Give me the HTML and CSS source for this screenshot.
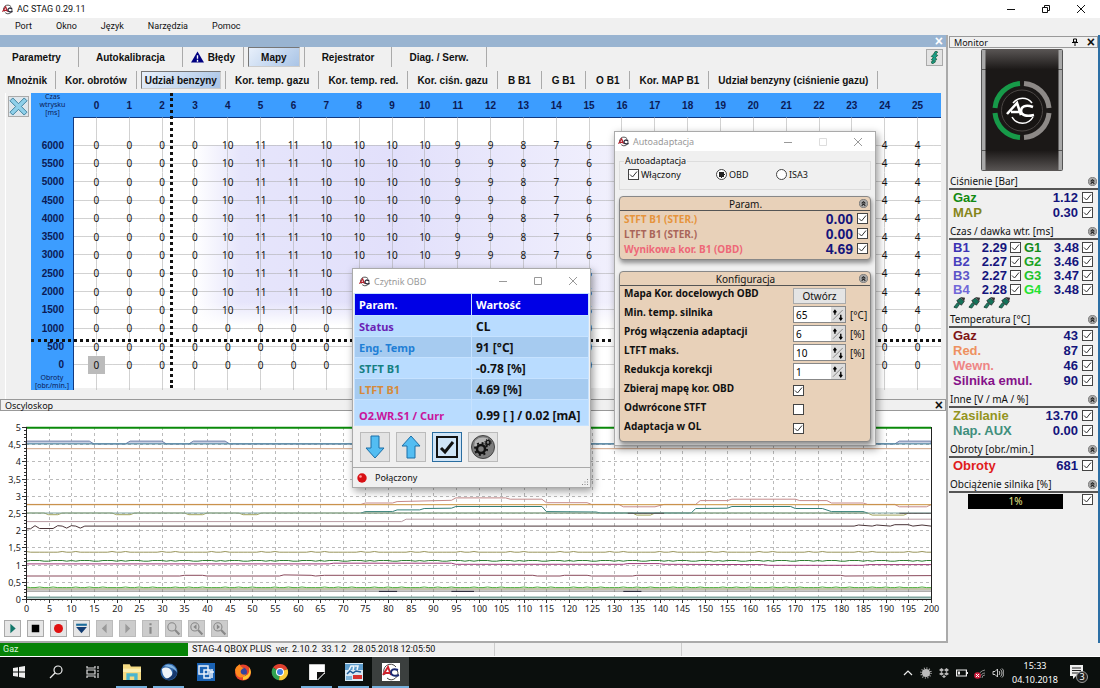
FILE: index.html
```html
<!DOCTYPE html>
<html lang="pl">
<head>
    <meta charset="UTF-8">
    <meta name="viewport" content="width=device-width, initial-scale=1.0">
    <title>AC STAG 0.29.11</title>
    <link rel="stylesheet" href="styles.css">
</head>
<body>
    <!-- Shared icons -->
    <svg class="defs" width="0" height="0">
        <symbol id="ac-logo" viewBox="0 0 24 24">
            <path d="M5 17a9.500 9.500 0 0 1 1-12 9.500 9.500 0 0 1 14 1" fill="none" stroke="#444" stroke-width="2"/>
            <path d="M21 9a9.500 9.500 0 0 1-5 12 9.500 9.500 0 0 1-9-2" fill="none" stroke="#444" stroke-width="2"/>
            <path d="M1 17L8 6l4 11M4 14h7" fill="none" stroke="#b5202c" stroke-width="2.500"/>
            <path d="M22 10c-6-3-9 0-9 3s4 6 10 3" fill="none" stroke="#223" stroke-width="2.800"/>
        </symbol>
        <symbol id="fold" viewBox="0 0 10 10">
            <circle cx="5" cy="5" r="4.500" fill="#aaa" stroke="#777"/>
            <path d="M3 5l2-2 2 2M3 7.500l2-2 2 2" fill="none" stroke="#222" stroke-width="1.200"/>
        </symbol>
        <symbol id="injector" viewBox="0 0 14 14">
            <path d="M1 12l4-5 2 2-3 4z" fill="#1c7a63" stroke="#1c4a3c"/>
            <path d="M4 5l4-3 4 4-3 4z" fill="#14735a" stroke="#222" stroke-width=".8"/>
            <path d="M8 1l5 1-1 4z" fill="#333"/>
        </symbol>
        <symbol id="cross" viewBox="0 0 10 10">
            <path d="M1 1l8 8M9 1l-8 8" fill="none" stroke="currentColor"/>
        </symbol>
        <symbol id="square" viewBox="0 0 10 10">
            <path d="M1.500 1.500h7v7h-7z" fill="none" stroke="currentColor"/>
        </symbol>
        <symbol id="dash" viewBox="0 0 10 10">
            <path d="M1 5.500h8" fill="none" stroke="currentColor"/>
        </symbol>
        <symbol id="lens" viewBox="0 0 14 14">
            <circle cx="5.500" cy="5.500" r="3.800" fill="none" stroke="#888"/>
            <path d="M8.500 8.500l4 4" stroke="#888" stroke-width="2"/>
        </symbol>
    </svg>

    <header class="titlebar">
        <svg class="app-icon"><use href="#ac-logo"/></svg>
        <span>AC STAG 0.29.11</span>
        <div class="window-buttons">
            <button aria-label="Minimalizuj"><svg><use href="#dash"/></svg></button>
            <button aria-label="Przywróć"><svg viewBox="0 0 10 10"><path d="M1.500 3.500h5v5h-5zM3.500 3V1.500h5v5H7" fill="none" stroke="#111"/></svg></button>
            <button aria-label="Zamknij"><svg><use href="#cross"/></svg></button>
        </div>
    </header>

    <nav class="menubar">
        <button>Port</button>
        <button>Okno</button>
        <button>Język</button>
        <button>Narzędzia</button>
        <button>Pomoc</button>
    </nav>

    <div class="workspace">
        <main class="left">
            <div class="strip"><button class="x-button light" aria-label="Zamknij">×</button></div>

            <div class="tabs main-tabs">
                <button class="tab">Parametry</button>
                <button class="tab">Autokalibracja</button>
                <button class="tab warn">
                    <svg viewBox="0 0 14 12"><path d="M7 0l7 12H0z" fill="#000080"/><path d="M7 4v4M7 9v2" stroke="#fff" stroke-width="1.500"/></svg>
                    Błędy
                </button>
                <button class="tab selected">Mapy</button>
                <button class="tab">Rejestrator</button>
                <button class="tab">Diag. / Serw.</button>
                <button class="wake" aria-label="Wtryskiwacze">
                    <svg viewBox="0 0 12 12"><path d="M7 0l2 1-2 2 2 1-2 2 1 2-2 1 1 1-3 2-1-2 2-1-2-1 2-2-2-1 2-2z" fill="#19a08a" stroke="#153" stroke-width=".7"/></svg>
                </button>
            </div>

            <div class="tabs map-tabs">
                <button class="tab">Mnożnik</button>
                <button class="tab">Kor. obrotów</button>
                <button class="tab selected">Udział benzyny</button>
                <button class="tab">Kor. temp. gazu</button>
                <button class="tab">Kor. temp. red.</button>
                <button class="tab">Kor. ciśn. gazu</button>
                <button class="tab bank">B B1</button>
                <button class="tab bank">G B1</button>
                <button class="tab bank">O B1</button>
                <button class="tab">Kor. MAP B1</button>
                <button class="tab">Udział benzyny (ciśnienie gazu)</button>
            </div>

            <section class="map-panel">
                <div class="map-tools">
                    <button aria-label="Wyczyść">
                        <svg viewBox="0 0 20 20"><path d="M4 1l6 6 6-6 3 3-6 6 6 6-3 3-6-6-6 6-3-3 6-6-6-6z" fill="#8fd0ea" stroke="#3c7f9c"/></svg>
                    </button>
                </div>
                <div class="map">
                    <table>
                        <tbody id="map-body"></tbody>
                    </table>
                    <div class="cursor-x"></div>
                    <div class="cursor-y"></div>
                </div>
            </section>

            <section class="scope">
                <div class="scope-title">
                    <span>Oscyloskop</span>
                    <button class="x-button" aria-label="Zamknij">×</button>
                </div>
                <svg id="scope-chart"></svg>
                <div class="scope-tools">
                    <button aria-label="Start"><svg viewBox="0 0 14 14"><path d="M5 2.500l5 4.500-5 4.500z" fill="#13776a"/></svg></button>
                    <button aria-label="Stop"><svg viewBox="0 0 14 14"><path d="M3.500 3.500h7v7h-7z"/></svg></button>
                    <button aria-label="Nagrywaj"><svg viewBox="0 0 14 14"><circle cx="7" cy="7" r="4.200" fill="#e01010"/></svg></button>
                    <button aria-label="Zapisz"><svg viewBox="0 0 14 14"><path d="M2 2.500h10v2H2z" fill="#1c6c9c"/><path d="M2 5.500h10l-5 6z" fill="#123c72"/></svg></button>
                    <button disabled aria-label="Wstecz"><svg viewBox="0 0 14 14"><path d="M9 2.500L4.500 7 9 11.500z" fill="#999"/></svg></button>
                    <button disabled aria-label="Dalej"><svg viewBox="0 0 14 14"><path d="M5 2.500L9.500 7 5 11.500z" fill="#999"/></svg></button>
                    <button disabled aria-label="Informacja"><svg viewBox="0 0 14 14"><path d="M7 2v2M7 5.500V12" stroke="#888" stroke-width="2"/></svg></button>
                    <button disabled aria-label="Lupa"><svg viewBox="0 0 14 14"><use href="#lens"/></svg></button>
                    <button disabled aria-label="Lupa w lewo"><svg viewBox="0 0 14 14"><use href="#lens"/><path d="M7 3L4 5.500 7 8z" fill="#888"/></svg></button>
                    <button disabled aria-label="Lupa w prawo"><svg viewBox="0 0 14 14"><use href="#lens"/><path d="M4.500 3l3 2.500-3 2.500z" fill="#888"/></svg></button>
                </div>
            </section>
        </main>

        <aside class="monitor">
            <div class="monitor-title">
                <span>Monitor</span>
                <button aria-label="Przypnij"><svg viewBox="0 0 8 8"><path d="M2.500 1h3v3h-3zM1 4.500h6M4 5v3" fill="none" stroke="#000"/></svg></button>
                <button class="x-button" aria-label="Zamknij">×</button>
            </div>

            <svg class="device" viewBox="0 0 82 122">
                <defs>
                    <linearGradient id="body" x1="0" y1="0" x2="0" y2="1">
                        <stop offset="0" stop-color="#5a5655"/>
                        <stop offset=".17" stop-color="#1b1817"/>
                        <stop offset=".83" stop-color="#1b1817"/>
                        <stop offset="1" stop-color="#5a5655"/>
                    </linearGradient>
                </defs>
                <rect x=".5" y=".5" width="81" height="121" rx="1" fill="#a9a9a9" stroke="#555"/>
                <path d="M0 20.500h82M0 101.500h82" stroke="#555"/>
                <path d="M4.500 0h73v122h-73z" fill="url(#body)"/>
                <g fill="none" stroke-width="5">
                    <path d="M39 34.500A27 27 0 0 0 14 59" stroke="#179a49"/>
                    <path d="M14 64A27 27 0 0 0 39 88.500" stroke="#179a49"/>
                    <path d="M43 34.500A27 27 0 0 1 68 59" stroke="#8d8987"/>
                    <path d="M68 64A27 27 0 0 1 43 88.500" stroke="#8d8987"/>
                </g>
                <circle cx="41" cy="61.500" r="20.500" fill="#171413" stroke="#4c4745"/>
                <g fill="none" stroke="#fff">
                    <path d="M32 54A12 12 0 0 1 51 54M52 68A12 12 0 0 1 31 68" stroke-width="1.500"/>
                    <path d="M26 65L36 54l4 12M30 63h9" stroke-width="2.600"/>
                    <path d="M52 58c-8-3-12 0-12 4s5 6 13 4" stroke-width="2.600"/>
                </g>
            </svg>

            <section>
                <h2>Ciśnienie [Bar]<svg><use href="#fold"/></svg></h2>
                <label class="reading gas"><span>Gaz</span><output>1.12</output><input type="checkbox" checked></label>
                <label class="reading map-sensor"><span>MAP</span><output>0.30</output><input type="checkbox" checked></label>
            </section>
            <section>
                <h2>Czas / dawka wtr. [ms]<svg><use href="#fold"/></svg></h2>
                <div class="cylinders">
                    <label class="reading b1"><span>B1</span><output>2.29</output><input type="checkbox" checked></label>
                    <label class="reading g1"><span>G1</span><output>3.48</output><input type="checkbox" checked></label>
                    <label class="reading b2"><span>B2</span><output>2.27</output><input type="checkbox" checked></label>
                    <label class="reading g2"><span>G2</span><output>3.46</output><input type="checkbox" checked></label>
                    <label class="reading b3"><span>B3</span><output>2.27</output><input type="checkbox" checked></label>
                    <label class="reading g3"><span>G3</span><output>3.47</output><input type="checkbox" checked></label>
                    <label class="reading b4"><span>B4</span><output>2.28</output><input type="checkbox" checked></label>
                    <label class="reading g4"><span>G4</span><output>3.48</output><input type="checkbox" checked></label>
                </div>
                <div class="injectors">
                    <svg><use href="#injector"/></svg>
                    <svg><use href="#injector"/></svg>
                    <svg><use href="#injector"/></svg>
                    <svg><use href="#injector"/></svg>
                </div>
            </section>
            <section>
                <h2>Temperatura [°C]<svg><use href="#fold"/></svg></h2>
                <label class="reading gas-temp"><span>Gaz</span><output>43</output><input type="checkbox" checked></label>
                <label class="reading red-temp"><span>Red.</span><output>87</output><input type="checkbox" checked></label>
                <label class="reading inner-temp"><span>Wewn.</span><output>46</output><input type="checkbox" checked></label>
                <label class="reading engine-temp"><span>Silnika emul.</span><output>90</output><input type="checkbox" checked></label>
            </section>
            <section>
                <h2>Inne [V / mA / %]<svg><use href="#fold"/></svg></h2>
                <label class="reading supply"><span>Zasilanie</span><output>13.70</output><input type="checkbox" checked></label>
                <label class="reading aux"><span>Nap. AUX</span><output>0.00</output><input type="checkbox" checked></label>
            </section>
            <section>
                <h2>Obroty [obr./min.]<svg><use href="#fold"/></svg></h2>
                <label class="reading rpm"><span>Obroty</span><output>681</output><input type="checkbox" checked></label>
            </section>
            <section>
                <h2>Obciążenie silnika [%]<svg><use href="#fold"/></svg></h2>
                <label class="load"><span>1%</span><input type="checkbox" checked></label>
            </section>
        </aside>
    </div>

    <footer class="statusbar">
        <span class="fuel">Gaz</span>
        <span class="version">STAG-4 QBOX PLUS&nbsp; ver. 2.10.2&nbsp; 33.1.2&nbsp;&nbsp; 28.05.2018 12:05:50</span>
        <span class="cell"></span>
    </footer>

    <nav class="taskbar">
        <button aria-label="Start"><svg viewBox="0 0 16 16"><path d="M2 4l5-.8V7.600H2zM8 3l6-1v5.600H8zM2 8.400h5v4.400L2 12zM8 8.400h6V14l-6-1z" fill="#eee"/></svg></button>
        <button aria-label="Szukaj"><svg viewBox="0 0 16 16"><circle cx="10" cy="6" r="4" fill="none" stroke="#eee" stroke-width="1.200"/><path d="M7 9l-5 5" stroke="#eee" stroke-width="1.300"/></svg></button>
        <button aria-label="Widok zadań"><svg viewBox="0 0 16 16"><path d="M2 2v2h8V2M2 14v-2h8v2M2 6h8v4H2zM13 2v3M13 9v5M12 7h2" fill="none" stroke="#ddd" stroke-width="1.200"/></svg></button>
        <button class="open pinned" aria-label="Eksplorator"><svg viewBox="0 0 16 16"><path d="M0 1h6l1 2h9v12H0z" fill="#f4da82"/><path d="M0 5h16v3H0z" fill="#fbeeb0"/><path d="M3 9h10v6h-3v-3H6v3H3z" fill="#49b5cf"/></svg></button>
        <button class="open" aria-label="Thunderbird"><svg viewBox="0 0 18 18"><circle cx="9" cy="9" r="8.500" fill="#2d62a3"/><path d="M2 6c4-3 9-1 10 3 1 3-1 6-4 7-4-1-6-5-6-10z" fill="#eef3f8"/><path d="M4 3c5-4 12 0 13 6-3-4-8-5-13-6z" fill="#7fb2df"/><path d="M5 16c4 2 9 1 12-5 0-2-2-4-4-4 1 5-3 8-8 9z" fill="#17386c"/></svg></button>
        <button aria-label="Pulpit zdalny"><svg viewBox="0 0 18 18"><path d="M0 0h18v18H0z" fill="#1a62b4"/><path d="M2 3h9v8H2zM7 7h6v8H7zM13 9h4M15 6v9" fill="none" stroke="#eaf2fb" stroke-width="1.500"/></svg></button>
        <button aria-label="Firefox"><svg viewBox="0 0 18 18"><circle cx="9" cy="9.500" r="8" fill="#e8432c"/><path d="M9 17A8 8 0 0 0 15 4c1 6-1 9-6 9z" fill="#ffc52e"/><circle cx="8.500" cy="9" r="4.500" fill="#35449c"/><path d="M1 7C2 3 5 2 6 1c0 3 2 3 4 4-3 1-4 3-3 5s4 2 5 1c-1 4-8 5-10 0z" fill="#ff8a1e"/></svg></button>
        <button aria-label="Chrome"><svg viewBox="0 0 18 18"><path d="M9 9L2 4.500A8.300 8.300 0 0 1 16.500 6z" fill="#e0402f"/><path d="M9 9L2 4.500A8.300 8.300 0 0 0 8 17.300z" fill="#31a350"/><path d="M9 9l7.500-3A8.300 8.300 0 0 1 8 17.300z" fill="#f9ca3a"/><circle cx="9" cy="9" r="4" fill="#fff"/><circle cx="9" cy="9" r="3" fill="#3e7de0"/></svg></button>
        <button class="open" aria-label="Notatki"><svg viewBox="0 0 16 16"><path d="M1 1h14v8l-6 6H1z" fill="#fff"/><path d="M8 8h7l-7 7z" fill="#111"/></svg></button>
        <button class="open" aria-label="Edytor map"><svg viewBox="0 0 18 18"><path d="M0 0h18v18H0z" fill="#d8e9f5"/><path d="M0 1h18v6H0z" fill="#5d9ccb"/><path d="M4 7l2-4h3L8 7M10 3h3l-1 4" fill="none" stroke="#eef5fb" stroke-width="1.500"/><path d="M2 11l3-3 3 2 3-2 5 1" fill="none" stroke="#1d5c97" stroke-width="1.500"/><path d="M8 12h9v4H8z" fill="#d5322e"/><path d="M1 13h6v4H1z" fill="#7db4da"/></svg></button>
        <button class="open active" aria-label="AC STAG"><svg viewBox="0 0 18 18"><path d="M0 0h18v18H0z" fill="#fff"/><path d="M3 12a6.500 6.500 0 0 1 11-8M15 7a6.500 6.500 0 0 1-10 8" fill="none" stroke="#444"/><path d="M1 12l5-8 3 8M3 10h5" fill="none" stroke="#d0222c" stroke-width="1.900"/><path d="M16 7c-5-2-7 0-7 2.500S12 14 17 12" fill="none" stroke="#1b2a72" stroke-width="2"/></svg></button>

        <div class="tray">
            <svg viewBox="0 0 12 12"><path d="M2 8l4-4 4 4" fill="none" stroke="#eee" stroke-width="1.200"/></svg>
            <svg viewBox="0 0 12 12"><circle cx="6" cy="6" r="4" fill="#bbb"/><circle cx="6" cy="6" r="5" fill="none" stroke="#aaa" stroke-width="1.500" stroke-dasharray="1 1.600"/></svg>
            <svg viewBox="0 0 12 12"><path d="M3.500 1L6 3 3.500 5 1 3zM8.500 1L11 3 8.500 5 6 3zM3.500 5L6 7 3.500 8.500 1 7zM8.500 5L11 7 8.500 8.500 6 7zM6 8l2 1.500L6 11 4 9.500z" fill="#bbb"/></svg>
            <svg viewBox="0 0 12 12"><path d="M.6 3h9.800v6H.6zM11.500 5v2" fill="none" stroke="#eee" stroke-width="1.200"/><path d="M2 4.500h2v3H2z" fill="#eee"/></svg>
            <svg viewBox="0 0 12 12"><path d="M4 11A8 8 0 0 1 11 3M6 11a5 5 0 0 1 5-5M8 11a3 3 0 0 1 3-3" fill="none" stroke="#888"/><circle cx="3.500" cy="8.500" r="3.300" fill="#d02040"/><path d="M2 7l3 3M5 7l-3 3" stroke="#fff"/></svg>
            <svg viewBox="0 0 12 12"><path d="M1 4.500h2L5.500 2v8L3 7.500H1zM7 4c1 1 1 3 0 4M8.500 2.500c2 2 2 5 0 7M10 1.500c2.500 2.500 2.500 6.500 0 9" fill="none" stroke="#ddd" stroke-width=".9"/></svg>
            <time>15:33<br>04.10.2018</time>
            <svg class="notices" viewBox="0 0 20 20"><path d="M2 2h13v11h-7l-3 3v-3H2z" fill="#eee"/><path d="M4 5h9M4 7.500h9M4 10h6" stroke="#222"/><circle cx="14" cy="14" r="5.500" fill="#222" stroke="#999"/><text x="14" y="17" text-anchor="middle">3</text></svg>
        </div>
    </nav>

    <!-- OBD reader window -->
    <section class="window obd">
        <header class="window-title">
            <svg class="app-icon"><use href="#ac-logo"/></svg>
            <span>Czytnik OBD</span>
            <div class="window-buttons">
                <button aria-label="Minimalizuj"><svg><use href="#dash"/></svg></button>
                <button aria-label="Maksymalizuj"><svg><use href="#square"/></svg></button>
                <button aria-label="Zamknij"><svg><use href="#cross"/></svg></button>
            </div>
        </header>
        <table>
            <tr><th>Param.</th><th>Wartość</th></tr>
            <tr><td class="status">Status</td><td class="value">CL</td></tr>
            <tr><td class="eng">Eng. Temp</td><td class="value">91 [°C]</td></tr>
            <tr><td class="stft">STFT B1</td><td class="value">-0.78 [%]</td></tr>
            <tr><td class="ltft">LTFT B1</td><td class="value">4.69 [%]</td></tr>
            <tr><td class="o2">O2.WR.S1 / Curr</td><td class="value">0.99 [ ] / 0.02 [mA]</td></tr>
        </table>
        <div class="obd-tools">
            <button aria-label="W dół"><svg viewBox="0 0 24 24"><path d="M8 1h8v12h5l-9 10-9-10h5z" fill="#53bdf2" stroke="#1b6fa8"/></svg></button>
            <button aria-label="W górę"><svg viewBox="0 0 24 24"><path d="M8 23h8V11h5L12 1 3 11h5z" fill="#53bdf2" stroke="#1b6fa8"/></svg></button>
            <button class="pressed" aria-label="Wybierz"><svg viewBox="0 0 24 24"><path d="M2 2h20v20H2z" fill="none" stroke="#111" stroke-width="2"/><path d="M6 13l4 4 8-10" fill="none" stroke="#111" stroke-width="3"/></svg></button>
            <button aria-label="Ustawienia"><svg viewBox="0 0 24 24"><circle cx="12" cy="12" r="11.500" fill="#7d7d7d" stroke="#444"/><path d="M4 6a11 11 0 0 1 16 0c-5 2-11 3-17 6z" fill="#b5b5b5"/><circle cx="10" cy="14" r="4" fill="none" stroke="#111" stroke-width="2.500"/><circle cx="10" cy="14" r="6" fill="none" stroke="#111" stroke-width="2" stroke-dasharray="2 2.700"/><circle cx="17" cy="7.500" r="2" fill="none" stroke="#111" stroke-width="1.500"/><circle cx="17" cy="7.500" r="3.200" fill="none" stroke="#111" stroke-dasharray="1.200 1.300"/></svg></button>
        </div>
        <footer class="obd-status">
            <svg viewBox="0 0 10 10"><circle cx="5" cy="5" r="4.700" fill="#d80f14"/><circle cx="3.500" cy="3.500" r="1.300" fill="#ff9d9d"/></svg>
            <span>Połączony</span>
            <svg class="grip" viewBox="0 0 8 8"><path d="M6 1h1v1H6zM6 3.500h1v1H6zM3.500 3.500h1v1h-1zM6 6h1v1H6zM3.500 6h1v1h-1zM1 6h1v1H1z" fill="#888"/></svg>
        </footer>
    </section>

    <!-- Autoadaptation window -->
    <section class="window adapt">
        <header class="window-title">
            <svg class="app-icon"><use href="#ac-logo"/></svg>
            <span>Autoadaptacja</span>
            <div class="window-buttons">
                <button aria-label="Minimalizuj"><svg><use href="#dash"/></svg></button>
                <button disabled aria-label="Maksymalizuj"><svg><use href="#square"/></svg></button>
                <button aria-label="Zamknij"><svg><use href="#cross"/></svg></button>
            </div>
        </header>
        <fieldset>
            <legend>Autoadaptacja</legend>
            <label><input type="checkbox" checked>Włączony</label>
            <label><input type="radio" name="mode" checked>OBD</label>
            <label><input type="radio" name="mode">ISA3</label>
        </fieldset>
        <div class="card">
            <h2>Param.<svg><use href="#fold"/></svg></h2>
            <label class="result ster"><span>STFT B1 (STER.)</span><output>0.00</output><input type="checkbox" checked></label>
            <label class="result lster"><span>LTFT B1 (STER.)</span><output>0.00</output><input type="checkbox" checked></label>
            <label class="result wyn"><span>Wynikowa kor. B1 (OBD)</span><output>4.69</output><input type="checkbox" checked></label>
        </div>
        <div class="card config">
            <h2>Konfiguracja<svg><use href="#fold"/></svg></h2>
            <div class="option"><span class="name">Mapa Kor. docelowych OBD</span><button class="open-map">Otwórz</button></div>
            <div class="option">
                <label class="name" for="min-temp">Min. temp. silnika</label>
                <div class="spin"><input id="min-temp" type="text" value="65"><button aria-label="Zmień"><svg viewBox="0 0 14 14"><path d="M2 12L12 2" stroke="#888"/><path d="M4 7V3M2.500 4.500L4 2.500l1.500 2M10 7v5M8.500 10l1.500 2 1.500-2" fill="none" stroke="#000" stroke-width="1.400"/></svg></button></div>
                <span class="unit">[°C]</span>
            </div>
            <div class="option">
                <label class="name" for="threshold">Próg włączenia adaptacji</label>
                <div class="spin"><input id="threshold" type="text" value="6"><button aria-label="Zmień"><svg viewBox="0 0 14 14"><path d="M2 12L12 2" stroke="#888"/><path d="M4 7V3M2.500 4.500L4 2.500l1.500 2M10 7v5M8.500 10l1.500 2 1.500-2" fill="none" stroke="#000" stroke-width="1.400"/></svg></button></div>
                <span class="unit">[%]</span>
            </div>
            <div class="option">
                <label class="name" for="ltft-max">LTFT maks.</label>
                <div class="spin"><input id="ltft-max" type="text" value="10"><button aria-label="Zmień"><svg viewBox="0 0 14 14"><path d="M2 12L12 2" stroke="#888"/><path d="M4 7V3M2.500 4.500L4 2.500l1.500 2M10 7v5M8.500 10l1.500 2 1.500-2" fill="none" stroke="#000" stroke-width="1.400"/></svg></button></div>
                <span class="unit">[%]</span>
            </div>
            <div class="option">
                <label class="name" for="reduction">Redukcja korekcji</label>
                <div class="spin"><input id="reduction" type="text" value="1"><button aria-label="Zmień"><svg viewBox="0 0 14 14"><path d="M2 12L12 2" stroke="#888"/><path d="M4 7V3M2.500 4.500L4 2.500l1.500 2M10 7v5M8.500 10l1.500 2 1.500-2" fill="none" stroke="#000" stroke-width="1.400"/></svg></button></div>
            </div>
            <div class="option"><label class="name" for="collect">Zbieraj mapę kor. OBD</label><input id="collect" type="checkbox" checked></div>
            <div class="option"><label class="name" for="inverted">Odwrócone STFT</label><input id="inverted" type="checkbox"></div>
            <div class="option"><label class="name" for="open-loop">Adaptacja w OL</label><input id="open-loop" type="checkbox" checked></div>
        </div>
    </section>

    <script src="script.js"></script>
</body>
</html>
```
FILE: styles.css
```css
* {
    box-sizing: border-box;
}

body {
    margin: 0;
    height: 100vh;
    display: flex;
    flex-direction: column;
    overflow: hidden;
    background: #f0f0f0;
    color: #111;
    font-family: "Noto Sans", "Open Sans", sans-serif;
    font-size: 9px;
}

button {
    padding: 0;
    border: none;
    background: none;
    color: inherit;
    font: inherit;
}

button svg {
    display: block;
}

h2 {
    margin: 0;
    font-weight: 400;
}

.defs {
    position: absolute;
}

/* Check boxes and radio buttons */
input[type="checkbox"],
input[type="radio"] {
    appearance: none;
    flex: none;
    width: 11px;
    height: 11px;
    margin: 0;
    border: 1px solid #444;
    background: #fff center / 9px 9px no-repeat;
}

input[type="checkbox"]:checked {
    background-image: url("data:image/svg+xml,%3Csvg xmlns='http://www.w3.org/2000/svg' viewBox='0 0 9 9'%3E%3Cpath d='M1 4.500l2.500 2.500L8 1.500' fill='none' stroke='%23333'/%3E%3C/svg%3E");
}

input[type="radio"] {
    border-radius: 50%;
}

input[type="radio"]:checked {
    background: radial-gradient(circle, #222 0 3px, #fff 3px);
}

/* Title bar and menu */
.titlebar,
.menubar,
.statusbar {
    font-family: Roboto, "Noto Sans", sans-serif;
}

.titlebar {
    display: flex;
    align-items: center;
    height: 18px;
    padding: 0 2px;
    gap: 4px;
    background: #fff;
}

.app-icon {
    width: 11px;
    height: 11px;
}

.window-buttons {
    display: flex;
    margin-left: auto;
}

.window-buttons button {
    width: 35px;
    display: flex;
    justify-content: center;
}

.window-buttons svg {
    width: 10px;
    height: 10px;
}

.menubar {
    display: flex;
    align-items: center;
    height: 17px;
    padding-left: 3px;
}

.menubar button {
    padding: 0 12px 1px;
}

/* Work area */
.workspace {
    flex: 1;
    min-height: 0;
    display: flex;
    border-right: 2px solid #2c6fa5;
}

.left {
    flex: 1;
    min-width: 0;
    display: flex;
    flex-direction: column;
    border-right: 2px solid #aaa;
}

.strip {
    display: flex;
    justify-content: flex-end;
    height: 12px;
    padding-right: 3px;
    background: #99b4d1;
}

.x-button {
    font: bold 14px/12px "Liberation Sans", sans-serif;
}

.x-button.light {
    color: #fff;
}

.tabs {
    display: flex;
    height: 20px;
    font: bold 10px "Liberation Sans", Arial, sans-serif;
    white-space: nowrap;
}

.map-tabs {
    height: 18px;
    margin: 4px 0;
}

.tab {
    padding: 0 17px;
    border-right: 1px solid #aaa;
}

.main-tabs .tab:first-child {
    padding-left: 12px;
}

.main-tabs .warn {
    display: flex;
    align-items: center;
    gap: 4px;
    padding: 0 8px;
}

.warn svg {
    width: 13px;
    height: 12px;
}

.map-tabs .tab {
    padding: 0 9px;
}

.map-tabs .tab:first-child {
    padding: 0 8px 0 7px;
}

.map-tabs .bank {
    padding: 0 10px;
}

.main-tabs .selected,
.map-tabs .selected {
    margin: 0 4px;
    border: 1px solid #777;
    border-right-color: #ccc;
    border-bottom-color: #ccc;
    background: linear-gradient(135deg, #e8f0fb, #a9c4e6);
}

.main-tabs .selected {
    padding: 0 12px;
}

.map-tabs .selected {
    padding: 0 3px;
}

.selected + .tab {
    border-left: 1px solid #aaa;
}

.wake {
    width: 17px;
    height: 17px;
    margin: 2px 3px 0 auto;
    border: 1px solid #aaa;
    background: #e3e3e3;
}

.wake svg {
    height: 13px;
    margin: auto;
}

/* Fuel share map */
.map-panel {
    flex: 295;
    min-height: 0;
    display: flex;
    margin-left: 5px;
    padding: 0 5px 11px 0;
    border-left: 1px solid #fff;
}

.map-tools {
    width: 25px;
    padding: 3px 2px;
}

.map-tools button {
    width: 21px;
    height: 21px;
    border: 1px solid #aaa;
    background: #dde6ec;
}

.map {
    flex: 1;
    position: relative;
    background: #fff;
}

.map table {
    display: block;
    height: 100%;
}

.map tbody {
    display: grid;
    height: 100%;
    grid-template-rows: 24px 19px repeat(13, 1fr) 14px;
    background:
        linear-gradient(#fff0, #fff) 0 77% / 100% 8% no-repeat,
        linear-gradient(90deg, #fff0 18%, #e6e5fb 23%, #e2e0fb 40%, #f2f1fd 66%, #fff0 90%) 0 37% / 100% 60% no-repeat,
        #fff;
    background:
        linear-gradient(#fff0, #fff) 0 77% / 100% 8% no-repeat,
        linear-gradient(90deg, #fff0 18%, #e6e5fb 23%, #e2e0fb 40%, #f2f1fd 66%, #fff0 90%) 0 45% / 100% 61% no-repeat;
}

.map tr {
    display: grid;
    grid-template-columns: 43px 6px repeat(26, 1fr) 7px;
}

.map td,
.map th {
    display: flex;
    align-items: center;
    justify-content: center;
    padding: 0;
    min-width: 0;
    font-size: 10px;
}

.map td {
    background:
        linear-gradient(#aaa8, #aaa8) center / 1px 100% no-repeat,
        linear-gradient(#aaa8, #aaa8) center / 100% 1px no-repeat;
}

.map .gap td {
    background: linear-gradient(#aaa8, #aaa8) center / 1px 100% no-repeat;
}

.map td.edge {
    background: linear-gradient(#aaa8, #aaa8) center / 100% 1px no-repeat;
}

.map .gap td.edge {
    background: none;
}

.map th {
    background: #3c9dff;
    color: #0b1a55;
    font: bold 10px "Liberation Sans", Arial, sans-serif;
}

.map .head th {
    border-bottom: 1px solid #123a80;
}

.map th[scope="row"] {
    justify-content: flex-end;
    padding-right: 9px;
    border-right: 1px solid #123a80;
}

.map .unit-label {
    border-right: 1px solid #123a80;
    font: 7px/8px "Noto Sans", sans-serif;
    text-align: center;
}

.map .head .unit-label {
    border-right: none;
}

.map .current span {
    padding: 2px 6px;
    background: #bbb;
}

.cursor-x {
    position: absolute;
    top: 0;
    bottom: 0;
    left: 15.3%;
    border-left: 3px dotted #111;
}

.cursor-y {
    position: absolute;
    left: 0;
    right: 0;
    top: 83.5%;
    border-top: 3px dotted #111;
}

/* Oscilloscope */
.scope {
    flex: 242;
    min-height: 0;
    display: flex;
    flex-direction: column;
    background: #fff;
    border-bottom: 2px solid #aaa;
}

.scope-title {
    display: flex;
    justify-content: space-between;
    align-items: center;
    height: 12px;
    padding: 0 2px 0 4px;
    border: 1px solid #999;
    background: #f0f0f0;
}

.scope svg#scope-chart {
    flex: 1;
    width: 100%;
    min-height: 0;
}

#scope-chart text {
    font-size: 9px;
    fill: #222;
}

.scope-tools {
    display: flex;
    gap: 6px;
    padding: 0 4px 4px;
}

.scope-tools button {
    width: 17px;
    height: 17px;
    border: 1px solid #aaa;
    background: #e6e6e6;
}

.scope-tools button:disabled {
    background: #ccc;
    border-color: #bbb;
}

.scope-tools svg {
    width: 15px;
    height: 15px;
}

/* Monitor panel */
.monitor {
    width: 149px;
    margin-left: 1px;
    padding-top: 1px;
}

.monitor-title {
    display: flex;
    align-items: center;
    gap: 8px;
    height: 12px;
    padding: 0 2px 0 4px;
    border: 1px solid #999;
}

.monitor-title span {
    flex: 1;
}

.monitor-title svg {
    width: 8px;
    height: 8px;
}

.device {
    display: block;
    width: 82px;
    height: 122px;
    margin: 1px auto 3px 32px;
}

.monitor section {
    padding-bottom: 4px;
}

.monitor h2 {
    display: flex;
    justify-content: space-between;
    align-items: center;
    height: 16px;
    padding: 0 1px;
    border-bottom: 2px solid #555;
    font-size: 10px;
    line-height: 14px;
}

.monitor h2 svg {
    width: 9px;
    height: 9px;
}

.reading {
    display: flex;
    align-items: center;
    gap: 4px;
    height: 15px;
    padding: 0 5px 0 4px;
    font: bold 13px/15px "Liberation Sans", Arial, sans-serif;
}

.reading output,
.result output {
    margin-left: auto;
    color: #14147c;
}

.cylinders {
    display: grid;
    grid-template-columns: 73px 1fr;
}

.cylinders .reading {
    height: 14px;
    padding-right: 1px;
    gap: 3px;
}

.cylinders .reading:nth-child(even) {
    padding: 0 5px 0 2px;
}

.injectors {
    display: flex;
    gap: 2px;
    height: 12px;
    padding-left: 4px;
}

.injectors svg {
    width: 13px;
    height: 13px;
}

.gas { color: #128a12; }
.map-sensor { color: #85851a; }
.b1 { color: #3a32b4; }
.b2 { color: #4740bd; }
.b3 { color: #5c54c8; }
.b4 { color: #7068d8; }
.g1 { color: #138a1a; }
.g2 { color: #1aa324; }
.g3 { color: #1fc22b; }
.g4 { color: #23e231; }
.gas-temp { color: #7f1414; }
.red-temp { color: #ee9060; }
.inner-temp { color: #ee8585; }
.engine-temp { color: #85128a; }
.supply { color: #94941d; }
.aux { color: #3f8f7c; }
.rpm { color: #e01c1c; }

.load {
    display: flex;
    justify-content: space-between;
    padding: 1px 5px 0 19px;
}

.load span {
    width: 95px;
    background: #000;
    color: #e8e88a;
    font-size: 10px;
    line-height: 15px;
    text-align: center;
}

/* Status bar */
.statusbar {
    display: flex;
    height: 14px;
    border-bottom: 1px solid #fff;
    line-height: 13px;
}

.fuel {
    width: 188px;
    padding-left: 3px;
    background: #078307;
    color: #d9f5d9;
}

.version {
    width: 307px;
    padding-left: 4px;
    border-right: 1px solid #ccc;
}

.cell {
    width: 187px;
    border-right: 1px solid #ccc;
}

/* Taskbar */
.taskbar {
    display: flex;
    height: 31px;
    background: #0b0f0d;
    color: #fff;
}

.taskbar button {
    display: flex;
    align-items: center;
    justify-content: center;
    width: 37px;
    border-bottom: 2px solid transparent;
}

.taskbar button svg {
    width: 18px;
    height: 18px;
    flex: none;
}

.taskbar button:nth-child(-n+3) svg {
    width: 16px;
    height: 16px;
}

.taskbar .open {
    width: 31px;
    margin: 0 3px;
    border-bottom-color: #76b0dd;
}

.taskbar .pinned {
    margin-left: 5px;
}

.taskbar .active {
    width: 37px;
    margin: 0;
    background-color: #3b3f3e;
}

.tray {
    display: flex;
    align-items: center;
    gap: 6px;
    margin-left: auto;
    padding-right: 12px;
}

.tray svg {
    width: 12px;
    height: 12px;
}

.tray time {
    margin: 0 4px 0 2px;
    line-height: 14px;
    text-align: center;
}

.tray .notices {
    width: 20px;
    height: 20px;
}

.notices text {
    fill: #fff;
    font-size: 9px;
}

/* Floating windows */
.window {
    position: absolute;
    border: 1px solid #aaa;
    background: #f0f0f0;
    box-shadow: 2px 3px 8px #0006;
}

.window-title {
    display: flex;
    align-items: center;
    gap: 4px;
    height: 24px;
    padding-left: 6px;
    background: #fff;
    color: #999;
}

.window-title .window-buttons button:disabled {
    color: #ddd;
}

.obd {
    left: 352px;
    top: 268px;
    width: 239px;
}

.obd table {
    width: 235px;
    margin: 0 1px;
    table-layout: fixed;
    border-collapse: collapse;
    font-size: 11px;
    font-weight: 700;
}

.obd tr {
    background: #b9dcff;
}

.obd tr:nth-child(odd) {
    background: #a6cbf0;
}

.obd th,
.obd td {
    height: 21px;
    padding: 0 4px;
    border: 1px solid #c6e2ff;
    line-height: 19px;
    text-align: left;
    white-space: nowrap;
}

.obd th {
    height: 22px;
    background: #0000e6;
    color: #fff;
}

.obd .value {
    font-size: 12px;
}

.obd tr:last-child {
    background: #b9dcff;
}

.obd tr:last-child td {
    height: 26px;
    padding-top: 6px;
}

.obd .status { color: #6a1fb4; }
.obd .eng { color: #1f7fd6; }
.obd .stft { color: #148082; }
.obd .ltft { color: #d58a3c; }
.obd .o2 { color: #c8149c; }

.obd-tools {
    display: flex;
    gap: 6px;
    padding: 6px 7px 5px;
}

.obd-tools button {
    width: 30px;
    height: 30px;
    border: 1px solid #bbb;
    background: #e3e3e3;
}

.obd-tools .pressed {
    border: 1px solid #2a6da0;
    background: #cfe4f7;
}

.obd-tools svg {
    width: 24px;
    height: 24px;
    margin: auto;
}

.obd-status {
    display: flex;
    align-items: center;
    gap: 8px;
    height: 20px;
    padding: 0 1px 0 4px;
    border-top: 1px solid #aaa;
}

.obd-status svg {
    width: 10px;
    height: 10px;
}

.obd-status .grip {
    width: 8px;
    height: 8px;
    margin: auto 0 1px auto;
}

.adapt {
    left: 614px;
    top: 131px;
    width: 262px;
    padding-bottom: 3px;
}

.adapt .window-title {
    height: 19px;
    padding-left: 3px;
}

.adapt fieldset {
    display: flex;
    height: 35px;
    margin: 4px 4px 6px;
    padding: 1px 8px;
    border: 1px solid #ddd;
}

.adapt legend {
    padding: 0 1px;
    margin-left: -4px;
    line-height: 12px;
}

.adapt fieldset label {
    display: flex;
    align-items: center;
    gap: 2px;
    width: 60px;
    height: 13px;
}

.adapt fieldset label:nth-of-type(1) {
    width: 88px;
}

.card {
    margin: 0 4px;
    padding-bottom: 3px;
    border: 1px solid #888;
    border-radius: 4px;
    background: #e8d1b9;
    box-shadow: 1px 3px 4px #0006;
}

.card h2 {
    display: flex;
    align-items: center;
    height: 14px;
    border-bottom: 1px solid #555;
    font-size: 10px;
    padding: 0 2px 0 12px;
}

.card h2::before,
.card h2::after {
    content: "";
    flex: 1;
    order: -1;
}

.card h2::after {
    order: 1;
}

.card h2 svg {
    order: 2;
    width: 9px;
    height: 9px;
}

.result {
    display: flex;
    align-items: center;
    gap: 4px;
    height: 15px;
    padding: 0 2px 0 4px;
    font-size: 10px;
    font-weight: 700;
}

.result output {
    font: bold 14px "Liberation Sans", Arial, sans-serif;
}

.ster { color: #e6943c; }
.lster { color: #a9655a; }
.wyn { color: #ee6878; }

.config {
    margin-top: 11px;
    padding-bottom: 3px;
}

.option {
    display: grid;
    grid-template-columns: 165px 53px 1fr;
    column-gap: 4px;
    align-items: center;
    height: 19px;
    padding-left: 4px;
    font-size: 10px;
    font-weight: 700;
}

.option .name {
    align-self: start;
    line-height: 15px;
}

.open-map {
    height: 16px;
    border: 1px solid #aaa;
    background: #e4e4e4;
    font-weight: 400;
}

.spin {
    display: flex;
    height: 17px;
    border: 1px solid #888;
}

.spin input {
    width: 38px;
    min-width: 0;
    padding: 0 2px;
    border: none;
    font: inherit;
    font-weight: 400;
}

.spin button {
    width: 14px;
    background: #ddd;
}

.unit {
    font-weight: 400;
}
```
FILE: script.js
```js
const SVG_NS = 'http://www.w3.org/2000/svg';

// Fuel share map: injection time across, engine speed down
const fuelShare = [0, 0, 0, 0, 10, 11, 11, 10, 10, 10, 10, 9, 9, 8, 7, 6, 6, 5, 5, 5, 5, 4, 4, 4, 4, 4];

function buildMap() {
    const times = fuelShare.map((v, i) => `<th>${i}</th>`).join('');
    const blanks = fuelShare.map(() => '<td></td>').join('');
    const edge = '<td class="edge"></td>';
    let html = `<tr class="head"><th class="unit-label">Czas<br>wtrysku<br>[ms]</th><th></th>${times}<th></th></tr>`;
    html += `<tr class="gap"><th scope="row"></th>${edge}${blanks}${edge}</tr>`;
    for (let rpm = 6000; rpm >= 0; rpm -= 500) {
        const cells = fuelShare.map((v, i) => {
            const current = rpm === 0 && i === 0 ? ' class="current"' : '';
            return `<td${current}><span>${rpm >= 1500 ? v : 0}</span></td>`;
        }).join('');
        html += `<tr><th scope="row">${rpm}</th>${edge}${cells}${edge}</tr>`;
    }
    html += `<tr class="gap"><th class="unit-label">Obroty<br>[obr./min.]</th>${edge}${blanks}${edge}</tr>`;
    document.getElementById('map-body').innerHTML = html;
}

// Small up/down steps between two points
function ripple(from, to, base, step, seed) {
    const points = [];
    for (let x = from; x <= to; x++) {
        points.push([x, base + ((x * x + seed * x) % 11 < 3 ? step : 0)]);
    }
    return points;
}

const traces = [
    { color: '#0a8a0a', width: 2, points: [[0, 4.98], [200, 4.98]] },
    { color: '#6f7fa8', fill: '#c9cfe2', points: [[0, 4.51], [0, 4.59], [14, 4.59], [15, 4.51], [22, 4.51], [23, 4.59], [30, 4.59], [31, 4.51], [36, 4.51], [37, 4.59], [44, 4.59], [45, 4.51], [192, 4.51], [193, 4.59], [200, 4.59], [200, 4.51]] },
    { color: '#3e7f9a', points: [[0, 4.51], [200, 4.51]] },
    { color: '#cfa283', points: [[0, 4.37], [200, 4.37]] },
    { color: '#c58a8a', points: [[0, 2.75], [74, 2.75], [75, 2.79], [81, 2.79], [82, 2.83], [94, 2.87], [95, 2.94], [106, 2.94], [107, 2.9], [114, 2.9], [115, 2.8], [124, 2.8], [125, 2.75], [131, 2.75], [132, 2.68], [139, 2.68], [141, 2.75], [148, 2.75], [149, 2.86], [155, 2.86], [156, 2.9], [170, 2.9], [171, 2.86], [177, 2.86], [178, 2.79], [185, 2.79], [186, 2.75], [192, 2.75], [193, 2.68], [199, 2.68], [200, 2.74]] },
    { color: '#c9923c', points: [[0, 2.74], [200, 2.74]] },
    { color: '#a0a25a', points: [[0, 2.5], [4, 2.5], [5, 2.45], [7, 2.45], [8, 2.5], [19, 2.5], [20, 2.45], [23, 2.45], [24, 2.5], [35, 2.5], [36, 2.45], [39, 2.45], [40, 2.5], [47, 2.5], [48, 2.45], [51, 2.45], [52, 2.5], [134, 2.5], [135, 2.44], [138, 2.44], [139, 2.5], [186, 2.5], [187, 2.44], [194, 2.44], [195, 2.5]] },
    { color: '#347f78', points: [[74, 2.5], [75, 2.54], [81, 2.54], [82, 2.59], [87, 2.59], [88, 2.63], [94, 2.64], [95, 2.69], [114, 2.69], [115, 2.54], [126, 2.53], [127, 2.5], [147, 2.5], [148, 2.63], [155, 2.64], [156, 2.69], [169, 2.69], [170, 2.63], [176, 2.63], [178, 2.54], [185, 2.54], [186, 2.5]] },
    { color: '#7fa5a0', points: [[0, 2.5], [200, 2.5]] },
    { color: '#555', points: [[133, 2.49], [141, 2.49]] },
    { color: '#555', points: [[193, 2.49], [200, 2.49]] },
    { color: '#b79aa2', points: [[0, 2.25], [83, 2.25], [84, 2.32], [200, 2.32]] },
    { color: '#4b3438', points: [[0, 2.04], [1, 2.04], [2, 2.13], [3, 2.05], [6, 2.05], [7, 2.13], [8, 2.12], [9, 2.06], [10, 2.13], [11, 2.12], [12, 2.06], [13, 2.12], [183, 2.12], [184, 2.15], [187, 2.12], [188, 2.15], [191, 2.12], [192, 2.16], [195, 2.16], [196, 2.12], [198, 2.15], [200, 2.12]] },
    { color: '#98945a', points: ripple(0, 200, 1.36, 0.02, 3) },
    { color: '#2f7d32', points: ripple(0, 200, 1.12, -0.02, 2) },
    { color: '#a03a78', points: [[0, 1.02], [67, 1.02], [68, 1.04], [94, 1.04], [95, 1.01], [132, 1.01], [133, 1.03], [140, 1.03], [141, 1.01], [163, 1], [164, 0.98], [185, 0.98], [186, 1], [200, 1]] },
    { color: '#8a4a5c', points: [[0, 0.67], [34, 0.67], [35, 0.69], [39, 0.69], [40, 0.67], [56, 0.67], [57, 0.7], [63, 0.69], [64, 0.67], [66, 0.69], [112, 0.69], [113, 0.67], [118, 0.67], [119, 0.69], [124, 0.69], [125, 0.67], [134, 0.67], [135, 0.69], [180, 0.69], [181, 0.67], [200, 0.68]] },
    { color: '#4fae3c', points: ripple(0, 200, 0.33, 0.02, 5) },
    { color: '#8a8a5a', points: [[0, 0.29], [200, 0.29]] },
    { color: '#777', points: [[0, 0.23], [200, 0.23]] },
    { color: '#223', points: [[78, 0.22], [82, 0.22]] },
    { color: '#223', points: [[94, 0.22], [99, 0.22]] },
    { color: '#223', points: [[132, 0.22], [136, 0.22]] },
    { color: '#7fa5a0', width: 2, points: [[0, 0.04], [200, 0.04]] }
];

function draw(parent, name, attrs, text) {
    const el = document.createElementNS(SVG_NS, name);
    for (const key in attrs) {
        el.setAttribute(key, attrs[key]);
    }
    if (text !== undefined) {
        el.textContent = text;
    }
    parent.appendChild(el);
}

function drawScope() {
    const svg = document.getElementById('scope-chart');
    const box = svg.getBoundingClientRect();
    const left = 26, right = box.width - 15, top = 16, bottom = box.height - 21;
    const px = v => left + (right - left) * v / 200;
    const py = v => bottom - (bottom - top) * v / 5;
    svg.innerHTML = '';

    for (let v = 0; v <= 50; v++) {
        const y = Math.round(py(v / 10)) + 0.5;
        const major = v % 5 === 0;
        draw(svg, 'path', { d: `M${left - (major ? 4 : 2)} ${y}H${left}`, stroke: '#333' });
        if (major) {
            draw(svg, 'path', { d: `M${left} ${y}H${right}`, stroke: '#bbb', 'stroke-dasharray': '3 3' });
            draw(svg, 'text', { x: left - 5, y: y + 3, 'text-anchor': 'end' }, String(v / 10).replace('.', ','));
        }
    }
    for (let v = 0; v <= 200; v++) {
        const x = Math.round(px(v)) + 0.5;
        if (v % 5 === 0) {
            draw(svg, 'path', { d: `M${x} ${top}V${bottom}`, stroke: '#bbb', 'stroke-dasharray': '3 3' });
            draw(svg, 'path', { d: `M${x} ${bottom}v4`, stroke: '#333' });
            draw(svg, 'text', { x: x, y: bottom + 13, 'text-anchor': 'middle' }, v);
        } else {
            draw(svg, 'path', { d: `M${x} ${bottom}v2`, stroke: '#999' });
        }
    }
    traces.forEach(t => {
        const d = 'M' + t.points.map(p => `${px(p[0]).toFixed(1)} ${py(p[1]).toFixed(1)}`).join('L');
        draw(svg, 'path', { d: d, fill: t.fill || 'none', stroke: t.color, 'stroke-width': t.width || 1 });
    });
    draw(svg, 'path', { d: `M${left + 0.5} ${top}V${bottom + 0.5}H${right + 0.5}V${top}`, fill: 'none', stroke: '#222' });
}

buildMap();
drawScope();
window.addEventListener('resize', drawScope);
```
